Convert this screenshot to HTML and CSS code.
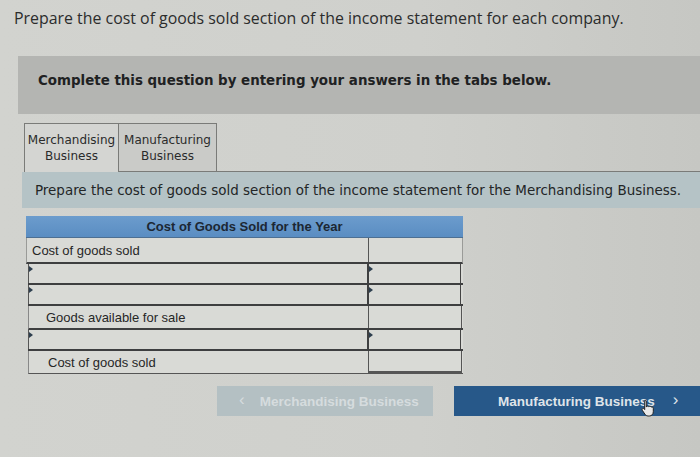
FILE: index.html
```html
<!DOCTYPE html>
<html>
<head>
<meta charset="utf-8">
<link rel="stylesheet" href="styles.css">
</head>
<body>
<div class="page">
  <div class="title">Prepare the cost of goods sold section of the income statement for each company.</div>
  <div class="notice"><span>Complete this question by entering your answers in the tabs below.</span></div>
  <div class="tabs">
    <div class="tab active">Merchandising<br>Business</div>
    <div class="tab">Manufacturing<br>Business</div>
    <div class="tab-fill"></div>
  </div>
  <div class="instr">Prepare the cost of goods sold section of the income statement for the Merchandising Business.</div>
  <div class="sheet">
    <div class="hdr">Cost of Goods Sold for the Year</div>
    <div class="row label first"><div class="c1">Cost of goods sold</div><div class="c2"></div></div>
    <div class="row input r2"><div class="c1"><i class="mark"></i></div><div class="c2"><i class="mark"></i></div></div>
    <div class="row input r3"><div class="c1"><i class="mark"></i></div><div class="c2"><i class="mark"></i></div></div>
    <div class="row label sub r4"><div class="c1">Goods available for sale</div><div class="c2"></div></div>
    <div class="row input r5"><div class="c1"><i class="mark"></i></div><div class="c2"><i class="mark"></i></div></div>
    <div class="row label sub last"><div class="c1">Cost of goods sold</div><div class="c2"></div></div>
  </div>
  <div class="nav">
    <div class="btn prev"><span class="chev">&lsaquo;</span><span>Merchandising Business</span></div>
    <div class="btn next"><span>Manufacturing Business</span><span class="chev">&rsaquo;</span>
      <svg class="cursor" width="14" height="18" viewBox="0 0 14 18"><path d="M4 1.5c.8 0 1.3.5 1.3 1.3V8l.2-.1c.2-.6.7-.9 1.2-.9.6 0 1 .3 1.2.8.3-.4.7-.6 1.1-.6.6 0 1 .4 1.2.9.2-.2.5-.3.8-.3.8 0 1.3.6 1.3 1.4v3.5c0 2.4-1.6 4.3-4 4.3H7.2c-1.4 0-2.4-.6-3.2-1.7L1.3 11.3c-.4-.6-.3-1.3.2-1.7.5-.4 1.2-.3 1.6.2l.6.8V2.8C2.7 2 3.2 1.5 4 1.5z" fill="#e8e8e8" stroke="#222" stroke-width="1"/></svg>
    </div>
  </div>
</div>
</body>
</html>
```
FILE: styles.css
```css
html, body {
  margin: 0;
  padding: 0;
}
body {
  background: #d0d1cd;
  width: 700px;
  height: 457px;
  overflow: hidden;
}
.page {
  background: linear-gradient(90deg, #d2d3cf 0%, #cfd0cc 60%, #c6c7c3 100%);
  height: 457px;
  overflow: hidden;
}
.title {
  font-family: "Open Sans", sans-serif;
  font-size: 15.9px;
  color: #2b2c2c;
  padding: 8px 0 0 14px;
  line-height: 20px;
  height: 20px;
}
.notice {
  margin: 28px 0 0 18px;
  height: 58px;
  box-sizing: border-box;
  background: #b4b5b2;
  display: flex;
  align-items: flex-start;
  padding: 16px 0 0 20px;
  font-family: "DejaVu Sans", sans-serif;
  font-weight: bold;
  font-size: 13.4px;
  line-height: 18px;
  color: #202122;
}
.tabs {
  margin: 9px 0 0 24px;
  height: 49px;
  display: flex;
  align-items: stretch;
}
.tab {
  box-sizing: border-box;
  width: 95px;
  border: 1px solid #7a7b78;
  border-bottom: none;
  background: #cfd0cd;
  font-family: "DejaVu Sans", sans-serif;
  font-size: 12px;
  line-height: 16px;
  color: #2a2b2b;
  text-align: center;
  padding-top: 8px;
}
.tab.active {
  width: 95px;
  background: #d4d5d2;
}
.tab + .tab {
  width: 98px;
  border-left: none;
  border-bottom: 1px solid #7a7b78;
  background: #cacbc8;
}
.tab-fill {
  flex: 1;
  border-bottom: 1px solid #7a7b78;
}
.instr {
  margin-left: 22px;
  height: 36px;
  background: #b5c3c6;
  display: flex;
  align-items: center;
  padding-left: 13px;
  font-family: "DejaVu Sans", sans-serif;
  font-size: 13.45px;
  color: #232627;
}
.sheet {
  margin: 8px 0 0 26px;
  width: 437px;
  font-family: "Liberation Sans", Arial, sans-serif;
  font-size: 13px;
  color: #262626;
}
.hdr {
  height: 21px;
  background: linear-gradient(180deg, #6c9ccd, #5a8dc2);
  border-bottom: 1px solid #4d6f92;
  text-align: center;
  font-weight: bold;
  line-height: 21px;
  color: #1c2733;
}
.row {
  display: grid;
  grid-template-columns: 341px 96px;
  background: #d9dad6;
}
.row .c1, .row .c2 {
  position: relative;
  box-sizing: border-box;
}
.row.label .c1 {
  padding-left: 5px;
  display: flex;
  align-items: center;
}
.row.label .c2 {
  border-left: 1px solid #555;
}
.row.first {
  height: 26px;
  border-bottom: 2px solid #3e3f40;
  border-left: 1px solid #9a9b98;
  border-right: 1px solid #9a9b98;
  box-sizing: border-box;
}
.row.input {
  height: 21px;
  box-sizing: border-box;
  border-bottom: 2px solid #3e3f40;
  margin-left: 2px;
  width: 435px;
  grid-template-columns: 339px 96px;
}
.row.input .c1 {
  border-left: 1px solid #555;
}
.row.input .c2 {
  border-left: 2px solid #3e3f40;
  border-right: 1px solid #444;
  margin-right: 2px;
}
.row.sub {
  margin-left: 2px;
  width: 435px;
  grid-template-columns: 339px 96px;
  box-sizing: border-box;
  border-left: 1px solid #888;
}
.row.sub .c1 {
  padding-left: 17px;
}
.row.r4 {
  height: 24px;
  border-bottom: 2px solid #3e3f40;
}
.row.r4 .c2 {
  border-right: 1px solid #555;
  margin-right: 2px;
}
.row.last {
  height: 23px;
  border-bottom: 1px solid #555;
}
.row.last .c1 {
  padding-left: 19px;
}
.row.last .c2 {
  border-right: 1px solid #555;
  border-bottom: 2px solid #555;
  margin-right: 2px;
}
.mark {
  position: absolute;
  left: 0;
  top: 2px;
  width: 0;
  height: 0;
  border-top: 3px solid transparent;
  border-bottom: 3px solid transparent;
  border-left: 4px solid #2d3e4e;
}
.nav {
  margin: 12px 0 0 217px;
  display: flex;
  gap: 21px;
  font-family: "Liberation Sans", Arial, sans-serif;
  font-weight: bold;
  font-size: 13.5px;
}
.btn {
  height: 30px;
  display: flex;
  align-items: center;
  box-sizing: border-box;
}
.btn.prev {
  width: 220px;
  background: #b4c0c3;
  color: #d6dcde;
  padding-left: 22px;
}
.btn.prev .chev {
  font-size: 17px;
  font-weight: normal;
  margin-right: 15px;
  margin-top: -2px;
}
.btn.next {
  position: relative;
  width: 250px;
  background: #275889;
  color: #dfe4e9;
  padding-left: 44px;
}
.btn.next .chev {
  font-size: 17px;
  font-weight: normal;
  margin-left: 18px;
  margin-top: -2px;
}
.cursor {
  position: absolute;
  left: 187px;
  top: 13px;
}
```
